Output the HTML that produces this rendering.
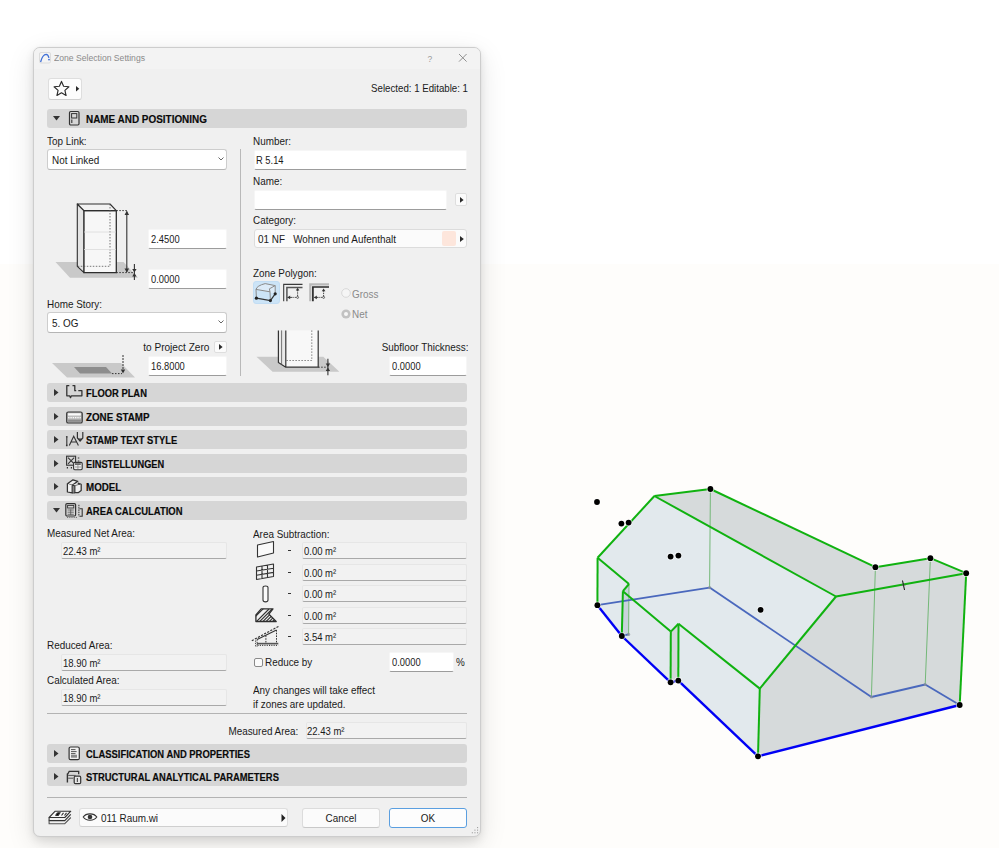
<!DOCTYPE html>
<html><head><meta charset="utf-8"><style>
html,body{margin:0;padding:0}
body{width:999px;height:848px;background:linear-gradient(to bottom,#ffffff 0,#ffffff 264px,#fefdfb 264px,#fefdfb 100%);position:relative;overflow:hidden;font-family:"Liberation Sans",sans-serif}
.a{position:absolute;box-sizing:border-box}
.t{position:absolute;white-space:pre;line-height:1;font-family:"Liberation Sans",sans-serif}
.b{-webkit-text-stroke:0.15px currentColor}
svg.a{overflow:visible}
</style></head><body>

<div class="a" style="left:33px;top:47px;width:448px;height:790px;background:#f0f0f0;border:1px solid #cdcdcd;border-radius:7px;box-shadow:0 4px 10px rgba(0,0,0,0.09),0 8px 28px rgba(0,0,0,0.11),0 0 2px rgba(0,0,0,0.06)"></div>
<div class="a" style="left:34px;top:48px;width:446px;height:21px;background:#f3f3f3;border-radius:6px 6px 0 0"></div>
<svg class="a" style="left:39px;top:52px;" width="12" height="12" viewBox="0 0 12 12"><rect x="0.5" y="0.5" width="11" height="10.5" rx="1.5" fill="#f4f4f4" stroke="#dcdcdc"/><path d="M1.6 10 C2.6 6 4.6 2.4 7.2 2.3 C8.6 2.3 9.5 4 9.9 5.8" fill="none" stroke="#3f6fd6" stroke-width="1.3"/><circle cx="10" cy="7.6" r="0.9" fill="#3f6fd6"/></svg>
<div class="t" style="left:54.40px;top:53.45px;font-size:9.6px;color:#8b8b8b;transform:scaleX(0.8979);transform-origin:left top;">Zone Selection Settings</div>
<div class="t" style="left:229.70px;width:400px;text-align:center;top:53.86px;font-size:9.5px;color:#9a9a9a;transform:scaleX(0.8947);transform-origin:center top;">?</div>
<svg class="a" style="left:458px;top:53px;" width="10" height="10" viewBox="0 0 10 10"><path d="M1 1 L8.6 8.6 M8.6 1 L1 8.6" stroke="#8a8a8a" stroke-width="0.95"/></svg>
<div class="a" style="left:48px;top:78px;width:34px;height:22px;background:#fdfdfd;border:1px solid #dedede;border-bottom:1px solid #cfcfcf;border-radius:3px"></div>
<svg class="a" style="left:54px;top:80px;" width="16" height="17" viewBox="0 0 16 17"><path d="M7.50 1.40 L9.62 6.29 L14.92 6.79 L10.92 10.31 L12.08 15.51 L7.50 12.80 L2.92 15.51 L4.08 10.31 L0.08 6.79 L5.38 6.29 Z" fill="none" stroke="#2b2b2b" stroke-width="1.15" stroke-linejoin="round"/></svg>
<svg class="a" style="left:76px;top:86px;" width="4" height="6" viewBox="0 0 4 6"><path d="M0 0 L3.3 2.8 L0 5.6 Z" fill="#2a2a2a"/></svg>
<div class="t" style="right:531.30px;top:84.38px;font-size:10.1px;color:#1a1a1a;transform:scaleX(0.9594);transform-origin:right top;">Selected: 1 Editable: 1</div>
<div class="a" style="left:47px;top:109px;width:420px;height:19px;background:#d6d6d6;border-radius:3px"></div>
<svg class="a" style="left:53px;top:116px;" width="7" height="5" viewBox="0 0 7 5"><path d="M0 0 L7 0 L3.5 4.5 Z" fill="#333"/></svg>
<svg class="a" style="left:65px;top:110px;" width="18" height="17" viewBox="0 0 18 17"><rect x="4.5" y="1.5" width="9.5" height="13.5" rx="1.2" fill="none" stroke="#333" stroke-width="1.2"/><rect x="6.6" y="3.6" width="5.2" height="4.4" fill="none" stroke="#333" stroke-width="1"/><path d="M6.8 9.6 V13" stroke="#333" stroke-width="1.1"/></svg>
<div class="t b" style="left:86.40px;top:114.59px;font-size:10px;font-weight:bold;color:#0a0a0a;transform:scaleX(0.9922);transform-origin:left top;">NAME AND POSITIONING</div>
<div class="a" style="left:47px;top:383px;width:420px;height:19px;background:#d6d6d6;border-radius:3px"></div>
<svg class="a" style="left:54px;top:389px;" width="5" height="7" viewBox="0 0 5 7"><path d="M0 0 L4.5 3.5 L0 7 Z" fill="#333"/></svg>
<svg class="a" style="left:65px;top:384px;" width="18" height="17" viewBox="0 0 18 17"><path d="M4.3 1.6 H1.8 V11.8 H4.6 L5.5 13.6 L6.4 11.8 H16.9 V6.7 H13.3 M7.5 1.6 H9.8 V6.7 H11.2" fill="none" stroke="#333" stroke-width="1.3" stroke-linejoin="round"/></svg>
<div class="t b" style="left:86.40px;top:388.59px;font-size:10px;font-weight:bold;color:#0a0a0a;transform:scaleX(0.9370);transform-origin:left top;">FLOOR PLAN</div>
<div class="a" style="left:47px;top:407px;width:420px;height:19px;background:#d6d6d6;border-radius:3px"></div>
<svg class="a" style="left:54px;top:413px;" width="5" height="7" viewBox="0 0 5 7"><path d="M0 0 L4.5 3.5 L0 7 Z" fill="#333"/></svg>
<svg class="a" style="left:65px;top:408px;" width="18" height="17" viewBox="0 0 18 17"><rect x="1.7" y="4" width="15.5" height="11" rx="1.6" fill="#bdbdbd" stroke="#333" stroke-width="1.2"/><rect x="3.1" y="5.3" width="12.7" height="2.2" fill="#fafafa"/><path d="M3.1 9.6 H15.8" stroke="#fafafa" stroke-width="1.2" stroke-dasharray="1.4 0.9"/><rect x="3.1" y="11.6" width="12.7" height="2.2" fill="#8c8c8c"/></svg>
<div class="t b" style="left:86.40px;top:412.59px;font-size:10px;font-weight:bold;color:#0a0a0a;transform:scaleX(0.9782);transform-origin:left top;">ZONE STAMP</div>
<div class="a" style="left:47px;top:430px;width:420px;height:19px;background:#d6d6d6;border-radius:3px"></div>
<svg class="a" style="left:54px;top:436px;" width="5" height="7" viewBox="0 0 5 7"><path d="M0 0 L4.5 3.5 L0 7 Z" fill="#333"/></svg>
<svg class="a" style="left:65px;top:431px;" width="18" height="17" viewBox="0 0 18 17"><path d="M1.8 6.2 V14" stroke="#333" stroke-width="1.1"/><circle cx="1.8" cy="5.8" r="0.9" fill="#333"/><circle cx="1.8" cy="14.4" r="0.9" fill="#333"/><path d="M4.3 14.4 L8.7 5.2 L13.4 14.4 M6.2 11 H11.5" fill="none" stroke="#333" stroke-width="1.1"/><path d="M12.4 1 V7 L15.1 10 L17.8 7 V1" fill="none" stroke="#333" stroke-width="1.2"/><path d="M13.2 7.5 H17 L15.1 9.6 Z" fill="#333"/></svg>
<div class="t b" style="left:86.40px;top:435.59px;font-size:10px;font-weight:bold;color:#0a0a0a;transform:scaleX(0.9362);transform-origin:left top;">STAMP TEXT STYLE</div>
<div class="a" style="left:47px;top:454px;width:420px;height:19px;background:#d6d6d6;border-radius:3px"></div>
<svg class="a" style="left:54px;top:460px;" width="5" height="7" viewBox="0 0 5 7"><path d="M0 0 L4.5 3.5 L0 7 Z" fill="#333"/></svg>
<svg class="a" style="left:65px;top:455px;" width="18" height="17" viewBox="0 0 18 17"><rect x="1.6" y="1.2" width="9" height="9" fill="none" stroke="#333" stroke-width="1.1"/><path d="M3 2.6 L9.2 8.8 M9.2 2.6 L3 8.8" stroke="#333" stroke-width="1.1"/><path d="M12.8 3 H14.3 M12.8 6 H14.3" stroke="#333" stroke-width="1.2"/><rect x="8.6" y="7.4" width="8.6" height="7.3" rx="1.2" fill="#eee" stroke="#333" stroke-width="1.1"/><rect x="10" y="8.4" width="5.8" height="1.3" fill="#333"/><path d="M12.9 10 V14 M10 12 H16" stroke="#888" stroke-width="0.8"/><path d="M1.8 12.7 H3 M5.8 12.7 H7" stroke="#333" stroke-width="1.5"/></svg>
<div class="t b" style="left:86.40px;top:459.59px;font-size:10px;font-weight:bold;color:#0a0a0a;transform:scaleX(0.9260);transform-origin:left top;">EINSTELLUNGEN</div>
<div class="a" style="left:47px;top:477px;width:420px;height:19px;background:#d6d6d6;border-radius:3px"></div>
<svg class="a" style="left:54px;top:483px;" width="5" height="7" viewBox="0 0 5 7"><path d="M0 0 L4.5 3.5 L0 7 Z" fill="#333"/></svg>
<svg class="a" style="left:65px;top:478px;" width="18" height="17" viewBox="0 0 18 17"><g fill="none" stroke="#333" stroke-width="1.25" stroke-linejoin="round"><path d="M2.4 5.8 L8 1.8 L12.8 3.3 L7.2 7.3 Z" fill="#ececec"/><path d="M2.4 5.8 V14 L7.2 14.8 V7.3" fill="#f2f2f2"/><path d="M7.2 7.3 L9.8 7.8 L16.2 6.4 L12.8 5.2" fill="#e8e8e8"/><path d="M9.8 7.8 V14.7 L13.5 14.6 L16.2 12.5 V6.4" fill="#f0f0f0"/><path d="M7.2 14.8 H9.8"/></g><path d="M8.5 8 V14.5" stroke="#888" stroke-width="1.2"/></svg>
<div class="t b" style="left:86.40px;top:482.59px;font-size:10px;font-weight:bold;color:#0a0a0a;transform:scaleX(0.9776);transform-origin:left top;">MODEL</div>
<div class="a" style="left:47px;top:501px;width:420px;height:19px;background:#d6d6d6;border-radius:3px"></div>
<svg class="a" style="left:53px;top:508px;" width="7" height="5" viewBox="0 0 7 5"><path d="M0 0 L7 0 L3.5 4.5 Z" fill="#333"/></svg>
<svg class="a" style="left:65px;top:502px;" width="18" height="17" viewBox="0 0 18 17"><rect x="0.8" y="1.6" width="9.8" height="12.4" rx="1.2" fill="none" stroke="#333" stroke-width="1.2"/><rect x="2.6" y="3.4" width="6.2" height="2.6" fill="none" stroke="#333" stroke-width="0.9"/><path d="M2.6 8 H8.8 M2.6 10.2 H8.8 M2.6 12.3 H8.8 M5.7 7.4 V13" stroke="#555" stroke-width="0.8"/><path d="M13.9 2.8 V14.5" stroke="#333" stroke-width="1" stroke-dasharray="1.5 0.8"/><path d="M14.5 6.8 H17.2 V14.2 H14.5" fill="none" stroke="#333" stroke-width="1.1"/><path d="M2 15.4 H13" stroke="#555" stroke-width="0.8" stroke-dasharray="1.2 1"/></svg>
<div class="t b" style="left:86.40px;top:506.59px;font-size:10px;font-weight:bold;color:#0a0a0a;transform:scaleX(0.9441);transform-origin:left top;">AREA CALCULATION</div>
<div class="a" style="left:47px;top:744px;width:420px;height:19px;background:#d6d6d6;border-radius:3px"></div>
<svg class="a" style="left:54px;top:750px;" width="5" height="7" viewBox="0 0 5 7"><path d="M0 0 L4.5 3.5 L0 7 Z" fill="#333"/></svg>
<svg class="a" style="left:65px;top:745px;" width="18" height="17" viewBox="0 0 18 17"><rect x="4.1" y="2" width="10.2" height="12.7" rx="1.5" fill="#f0f0f0" stroke="#333" stroke-width="1.2"/><path d="M6 4.6 H10.5 M6 6.6 H11.6 M6 8.6 H10.5" stroke="#444" stroke-width="0.9"/><rect x="6" y="9.7" width="6" height="3" fill="#8a8a8a"/></svg>
<div class="t b" style="left:86.40px;top:749.60px;font-size:10px;font-weight:bold;color:#0a0a0a;transform:scaleX(0.9395);transform-origin:left top;">CLASSIFICATION AND PROPERTIES</div>
<div class="a" style="left:47px;top:767px;width:420px;height:19px;background:#d6d6d6;border-radius:3px"></div>
<svg class="a" style="left:54px;top:773px;" width="5" height="7" viewBox="0 0 5 7"><path d="M0 0 L4.5 3.5 L0 7 Z" fill="#333"/></svg>
<svg class="a" style="left:65px;top:768px;" width="18" height="17" viewBox="0 0 18 17"><path d="M2.4 5.5 V14.5" stroke="#333" stroke-width="1.4"/><path d="M2.6 6.2 L4.2 3.4 H13.7 V6.3" fill="none" stroke="#333" stroke-width="1.3"/><path d="M3.2 7.4 H10.5 M3.2 10.2 H8.2" stroke="#555" stroke-width="1"/><rect x="9.2" y="8.2" width="6.5" height="7.4" rx="1.2" fill="#e6e6e6" stroke="#333" stroke-width="1.2"/><path d="M12.4 10 V14" stroke="#555" stroke-width="1.2"/></svg>
<div class="t b" style="left:86.40px;top:772.60px;font-size:10px;font-weight:bold;color:#0a0a0a;transform:scaleX(0.9393);transform-origin:left top;">STRUCTURAL ANALYTICAL PARAMETERS</div>
<div class="t" style="left:46.80px;top:137.08px;font-size:10.1px;color:#1a1a1a;transform:scaleX(0.9802);transform-origin:left top;">Top Link:</div>
<div class="a" style="left:47px;top:149px;width:180px;height:21px;background:#ffffff;border:1px solid #cdcdcd;border-bottom:1px solid #b5b5b5;border-radius:3px"></div>
<div class="t" style="left:51.70px;top:155.58px;font-size:10.1px;color:#1a1a1a;transform:scaleX(0.9802);transform-origin:left top;">Not Linked</div>
<svg class="a" style="left:218px;top:157px;" width="6" height="4" viewBox="0 0 6 4"><path d="M0.5 0.5 L3 3 L5.5 0.5" fill="none" stroke="#555" stroke-width="0.9"/></svg>
<div class="a" style="left:240px;top:149px;width:1px;height:227px;background:#b9b9b9"></div>
<div class="t" style="left:253.00px;top:137.28px;font-size:10.1px;color:#1a1a1a;transform:scaleX(0.9802);transform-origin:left top;">Number:</div>
<div class="a" style="left:254px;top:150px;width:213px;height:20px;background:#ffffff;border:1px solid #f6f6f6;border-bottom:1px solid #9c9c9c;border-radius:2px"></div>
<div class="t" style="left:256.40px;top:154.59px;font-size:10.8px;color:#1a1a1a;transform:scaleX(0.8657);transform-origin:left top;">R 5.14</div>
<div class="t" style="left:253.00px;top:176.78px;font-size:10.1px;color:#1a1a1a;transform:scaleX(0.9802);transform-origin:left top;">Name:</div>
<div class="a" style="left:254px;top:190px;width:193px;height:20px;background:#ffffff;border:1px solid #f6f6f6;border-bottom:1px solid #9c9c9c;border-radius:2px"></div>
<div class="a" style="left:455px;top:193px;width:12px;height:13px;background:#fbfbfb;border:1px solid #dedede;border-radius:2px"></div>
<svg class="a" style="left:459.6px;top:196.6px;" width="5" height="6" viewBox="0 0 5 6"><path d="M0 0 L3.6 2.9 L0 5.8 Z" fill="#2a2a2a"/></svg>
<div class="t" style="left:253.00px;top:215.98px;font-size:10.1px;color:#1a1a1a;transform:scaleX(0.9802);transform-origin:left top;">Category:</div>
<div class="a" style="left:254px;top:229px;width:213px;height:19px;background:#fbfbfb;border:1px solid #dcdcdc;border-radius:3px"></div>
<div class="t" style="left:258.00px;top:235.18px;font-size:10.1px;color:#1a1a1a;transform:scaleX(0.9802);transform-origin:left top;">01 NF   Wohnen und Aufenthalt</div>
<div class="a" style="left:442px;top:231px;width:14px;height:15px;background:#fde6dc;border-radius:2px"></div>
<svg class="a" style="left:460px;top:235.6px;" width="5" height="7" viewBox="0 0 5 7"><path d="M0 0 L3.8 3 L0 6 Z" fill="#2a2a2a"/></svg>
<svg class="a" style="left:50px;top:198px;" width="95" height="90" viewBox="0 0 95 90"><path d="M5.5 64 L20 79.7 L88 79.7 L73.5 64 Z" fill="#c9c9c9"/><path d="M27.3 6 L34 12.6 L34 74.6 L27.3 68.3 Z" fill="#e4e4e4" stroke="#2e2e2e" stroke-width="1.1" stroke-linejoin="round"/><path d="M34 12.6 L66.3 12.6 L66.3 74.6 L34 74.6 Z" fill="#f7f7f7" stroke="#2e2e2e" stroke-width="1.3"/><path d="M27.3 6 L60 6 L66.3 12.6 L34 12.6 Z" fill="#f2f2f2" stroke="#2e2e2e" stroke-width="1.1" stroke-linejoin="round"/><path d="M60 6 V68.3 H27.3" fill="none" stroke="#555" stroke-width="0.8" stroke-dasharray="1.5 1.5"/><path d="M34 34 H66 M34 51.5 H66" stroke="#dadada" stroke-width="0.8"/><path d="M66.3 12.6 H77 M66.3 74.6 H84" stroke="#333" stroke-width="1" stroke-dasharray="1.5 1.5"/><path d="M76.8 13.5 V74" stroke="#333" stroke-width="1.1"/><path d="M74.5 17 L76.8 12.8 L79.1 17 Z M74.5 70.5 L76.8 74.6 L79.1 70.5 Z" fill="#333"/><path d="M84.4 66 V82" stroke="#333" stroke-width="1.1"/><path d="M82.2 71 L84.4 74.6 L86.6 71 Z M82.2 78.6 L84.4 75 L86.6 78.6 Z" fill="#333"/></svg>
<div class="a" style="left:148px;top:229px;width:79px;height:20px;background:#ffffff;border:1px solid #f6f6f6;border-bottom:1px solid #9c9c9c;border-radius:2px"></div>
<div class="t" style="left:151.30px;top:233.59px;font-size:10.8px;color:#1a1a1a;transform:scaleX(0.8657);transform-origin:left top;">2.4500</div>
<div class="a" style="left:148px;top:269px;width:79px;height:20px;background:#ffffff;border:1px solid #f6f6f6;border-bottom:1px solid #9c9c9c;border-radius:2px"></div>
<div class="t" style="left:151.30px;top:273.59px;font-size:10.8px;color:#1a1a1a;transform:scaleX(0.8657);transform-origin:left top;">0.0000</div>
<div class="t" style="left:46.80px;top:300.18px;font-size:10.1px;color:#1a1a1a;transform:scaleX(0.9802);transform-origin:left top;">Home Story:</div>
<div class="a" style="left:47px;top:312px;width:180px;height:21px;background:#ffffff;border:1px solid #cdcdcd;border-bottom:1px solid #b5b5b5;border-radius:3px"></div>
<div class="t" style="left:51.70px;top:318.58px;font-size:10.1px;color:#1a1a1a;transform:scaleX(0.9802);transform-origin:left top;">5. OG</div>
<svg class="a" style="left:218px;top:320px;" width="6" height="4" viewBox="0 0 6 4"><path d="M0.5 0.5 L3 3 L5.5 0.5" fill="none" stroke="#555" stroke-width="0.9"/></svg>
<div class="t" style="left:143.20px;top:342.98px;font-size:10.1px;color:#1a1a1a;">to Project Zero</div>
<div class="a" style="left:214px;top:341px;width:13px;height:12px;background:#fbfbfb;border:1px solid #dedede;border-radius:2px"></div>
<svg class="a" style="left:219.1px;top:344.1px;" width="5" height="6" viewBox="0 0 5 6"><path d="M0 0 L3.6 2.9 L0 5.8 Z" fill="#2a2a2a"/></svg>
<div class="a" style="left:148px;top:356px;width:79px;height:20px;background:#ffffff;border:1px solid #f6f6f6;border-bottom:1px solid #9c9c9c;border-radius:2px"></div>
<div class="t" style="left:151.30px;top:360.59px;font-size:10.8px;color:#1a1a1a;transform:scaleX(0.8657);transform-origin:left top;">16.8000</div>
<svg class="a" style="left:50px;top:352px;" width="90" height="28" viewBox="0 0 90 28"><path d="M2 11 L17 25.6 L85 25.6 L71 11 Z" fill="#c9c9c9"/><path d="M24 15 L30 21.6 L62 21.6 L56 15 Z" fill="#8d8d8d"/><path d="M62 21.6 H72" stroke="#333" stroke-dasharray="1.5 1.5"/><path d="M73 3 V21" stroke="#333" stroke-width="1" stroke-dasharray="2 1"/><path d="M70.8 17.5 L73 21.6 L75.2 17.5 Z" fill="#333"/></svg>
<div class="t" style="left:253.00px;top:268.58px;font-size:10.1px;color:#1a1a1a;transform:scaleX(0.9802);transform-origin:left top;">Zone Polygon:</div>
<div class="a" style="left:253px;top:281px;width:27px;height:23px;background:#cce4f7;border:1px solid #c2ddf4;border-radius:3px"></div>
<svg class="a" style="left:253px;top:281px;" width="27" height="23" viewBox="0 0 27 23"><path d="M3 8.4 Q4 4.6 12.2 2.6 L22.2 4.6 L22.2 12.8" fill="#dcebf8" stroke="#8a8a8a" stroke-width="1"/><path d="M3 8.4 L17 10.8 L16.4 7.8 L22.2 4.6" fill="none" stroke="#8a8a8a" stroke-width="1"/><path d="M3 8.4 L3.4 17.2 M17 10.8 L17.4 19.6" fill="none" stroke="#8a8a8a" stroke-width="1"/><path d="M3.4 17.2 L17.4 19.6 L22.2 12.8" fill="none" stroke="#333" stroke-width="1.2"/><circle cx="3.4" cy="17.2" r="1.6" fill="#222"/><circle cx="17.4" cy="19.6" r="1.6" fill="#222"/><circle cx="22.2" cy="12.8" r="1.6" fill="#222"/></svg>
<svg class="a" style="left:283px;top:283px;" width="21" height="20" viewBox="0 0 21 20"><path d="M0.7 18.3 V1.4 H19.5" fill="none" stroke="#3a3a3a" stroke-width="1.1"/><path d="M3.9 18.3 V4.6 H19.5" fill="none" stroke="#555" stroke-width="1.5"/><path d="M4.6 14.4 H9" fill="none" stroke="#333" stroke-width="0.9"/><path d="M4.4 14.4 L7.2 12.6 L7.2 16.2 Z" fill="#333"/><path d="M9.5 14.4 H14" stroke="#333" stroke-width="0.9" stroke-dasharray="1.2 1"/><path d="M14.6 7 V14" stroke="#333" stroke-width="0.9" stroke-dasharray="1.4 0.9"/><path d="M14.6 4.8 L12.8 7.6 L16.4 7.6 Z" fill="#333"/><circle cx="14.6" cy="14.4" r="1" fill="none" stroke="#333" stroke-width="0.7"/></svg>
<svg class="a" style="left:309px;top:283px;" width="21" height="20" viewBox="0 0 21 20"><path d="M1.3 18.3 V1.4 H20" fill="none" stroke="#b9b9b9" stroke-width="2.2"/><path d="M3.9 18.3 V4 H20" fill="none" stroke="#2a2a2a" stroke-width="1.7"/><path d="M5.2 14.4 H9" fill="none" stroke="#333" stroke-width="0.9"/><path d="M5 14.4 L7.8 12.6 L7.8 16.2 Z" fill="#333"/><path d="M9.5 14.4 H14" stroke="#333" stroke-width="0.9" stroke-dasharray="1.2 1"/><path d="M14.6 7.4 V14" stroke="#333" stroke-width="0.9" stroke-dasharray="1.4 0.9"/><path d="M14.6 5.4 L12.8 8.2 L16.4 8.2 Z" fill="#333"/><circle cx="14.6" cy="14.4" r="1" fill="none" stroke="#333" stroke-width="0.7"/></svg>
<svg class="a" style="left:341px;top:288px;" width="10" height="10" viewBox="0 0 10 10"><circle cx="5" cy="5" r="4.3" fill="#f5f5f5" stroke="#d5d5d5" stroke-width="0.9"/></svg>
<div class="t" style="left:351.90px;top:289.98px;font-size:10.1px;color:#8a8a8a;transform:scaleX(0.9802);transform-origin:left top;">Gross</div>
<svg class="a" style="left:341px;top:308.5px;" width="10" height="10" viewBox="0 0 10 10"><circle cx="5" cy="5" r="4.6" fill="#c2c2c2"/><circle cx="5" cy="5" r="2" fill="#f7f7f7"/></svg>
<div class="t" style="left:351.90px;top:310.38px;font-size:10.1px;color:#8a8a8a;transform:scaleX(0.9802);transform-origin:left top;">Net</div>
<svg class="a" style="left:254px;top:328px;" width="90" height="50" viewBox="0 0 90 50"><path d="M2.5 28.8 L18.6 43.8 L85.4 43.8 L69.3 28.8 Z" fill="#c9c9c9"/><path d="M24.4 2.4 L31.8 2.4 L31.8 39.2 L24.4 34.6 Z" fill="#e9e9e9"/><rect x="31.8" y="2.4" width="32.4" height="36.8" fill="#f8f8f8"/><path d="M24.4 2.4 V34.6 L31.8 39.2 H64.2 V2.4 M31.8 2.4 V39.2" fill="none" stroke="#333" stroke-width="1.2" stroke-linejoin="round"/><path d="M27.6 2.4 V36.6" stroke="#555" stroke-width="0.8"/><path d="M57.8 2.4 V32.5 H31.8" fill="none" stroke="#666" stroke-width="0.8" stroke-dasharray="1.5 1.5"/><path d="M64.2 39.2 H73" stroke="#333" stroke-dasharray="1.5 1.5"/><path d="M73.9 30.7 V47.3" stroke="#333" stroke-width="1.1"/><path d="M71.7 35.5 L73.9 39 L76.1 35.5 Z M71.7 43 L73.9 39.4 L76.1 43 Z" fill="#333"/></svg>
<div class="t" style="right:530.80px;top:342.98px;font-size:10.1px;color:#1a1a1a;transform:scaleX(0.9802);transform-origin:right top;">Subfloor Thickness:</div>
<div class="a" style="left:389px;top:356px;width:78px;height:20px;background:#ffffff;border:1px solid #f6f6f6;border-bottom:1px solid #9c9c9c;border-radius:2px"></div>
<div class="t" style="left:392.10px;top:360.59px;font-size:10.8px;color:#1a1a1a;transform:scaleX(0.8657);transform-origin:left top;">0.0000</div>
<div class="t" style="left:46.80px;top:529.38px;font-size:10.1px;color:#1a1a1a;transform:scaleX(0.9802);transform-origin:left top;">Measured Net Area:</div>
<div class="a" style="left:61px;top:542px;width:166px;height:17px;background:#f2f2f2;border:1px solid #e6e6e6;border-bottom:1px solid #a9a9a9;border-radius:2px"></div>
<div class="t" style="left:62.80px;top:546.02px;font-size:10.6px;color:#1a1a1a;transform:scaleX(0.8962);transform-origin:left top;">22.43 m²</div>
<div class="t" style="left:46.80px;top:641.38px;font-size:10.1px;color:#1a1a1a;transform:scaleX(0.9802);transform-origin:left top;">Reduced Area:</div>
<div class="a" style="left:61px;top:654px;width:166px;height:17px;background:#f2f2f2;border:1px solid #e6e6e6;border-bottom:1px solid #a9a9a9;border-radius:2px"></div>
<div class="t" style="left:62.80px;top:658.02px;font-size:10.6px;color:#1a1a1a;transform:scaleX(0.8962);transform-origin:left top;">18.90 m²</div>
<div class="t" style="left:46.80px;top:676.38px;font-size:10.1px;color:#1a1a1a;transform:scaleX(0.9802);transform-origin:left top;">Calculated Area:</div>
<div class="a" style="left:61px;top:689px;width:166px;height:17px;background:#f2f2f2;border:1px solid #e6e6e6;border-bottom:1px solid #a9a9a9;border-radius:2px"></div>
<div class="t" style="left:62.80px;top:693.02px;font-size:10.6px;color:#1a1a1a;transform:scaleX(0.8962);transform-origin:left top;">18.90 m²</div>
<div class="t" style="left:253.00px;top:529.58px;font-size:10.1px;color:#1a1a1a;transform:scaleX(0.9802);transform-origin:left top;">Area Subtraction:</div>
<div class="a" style="left:302px;top:542px;width:165px;height:16.5px;background:#f2f2f2;border:1px solid #e6e6e6;border-bottom:1px solid #a9a9a9;border-radius:2px"></div>
<div class="t" style="left:303.60px;top:545.77px;font-size:10.6px;color:#1a1a1a;transform:scaleX(0.8962);transform-origin:left top;">0.00 m²</div>
<div class="a" style="left:287.5px;top:550px;width:3.5px;height:1px;background:#333"></div>
<div class="a" style="left:302px;top:564px;width:165px;height:16.5px;background:#f2f2f2;border:1px solid #e6e6e6;border-bottom:1px solid #a9a9a9;border-radius:2px"></div>
<div class="t" style="left:303.60px;top:567.77px;font-size:10.6px;color:#1a1a1a;transform:scaleX(0.8962);transform-origin:left top;">0.00 m²</div>
<div class="a" style="left:287.5px;top:572px;width:3.5px;height:1px;background:#333"></div>
<div class="a" style="left:302px;top:585px;width:165px;height:16.5px;background:#f2f2f2;border:1px solid #e6e6e6;border-bottom:1px solid #a9a9a9;border-radius:2px"></div>
<div class="t" style="left:303.60px;top:588.77px;font-size:10.6px;color:#1a1a1a;transform:scaleX(0.8962);transform-origin:left top;">0.00 m²</div>
<div class="a" style="left:287.5px;top:593px;width:3.5px;height:1px;background:#333"></div>
<div class="a" style="left:302px;top:607px;width:165px;height:16.5px;background:#f2f2f2;border:1px solid #e6e6e6;border-bottom:1px solid #a9a9a9;border-radius:2px"></div>
<div class="t" style="left:303.60px;top:610.77px;font-size:10.6px;color:#1a1a1a;transform:scaleX(0.8962);transform-origin:left top;">0.00 m²</div>
<div class="a" style="left:287.5px;top:615px;width:3.5px;height:1px;background:#333"></div>
<div class="a" style="left:302px;top:628px;width:165px;height:16.5px;background:#f2f2f2;border:1px solid #e6e6e6;border-bottom:1px solid #a9a9a9;border-radius:2px"></div>
<div class="t" style="left:303.60px;top:631.77px;font-size:10.6px;color:#1a1a1a;transform:scaleX(0.8962);transform-origin:left top;">3.54 m²</div>
<div class="a" style="left:287.5px;top:636px;width:3.5px;height:1px;background:#333"></div>
<svg class="a" style="left:255px;top:540px;" width="22" height="20" viewBox="0 0 22 20"><path d="M2.5 5 L18.5 1.5 L18.5 13 L2.5 17 Z" fill="#fafafa" stroke="#333" stroke-width="1.1" stroke-linejoin="round"/></svg>
<svg class="a" style="left:255px;top:562px;" width="22" height="20" viewBox="0 0 22 20"><path d="M1.5 5 L18.5 2 L18.5 14.5 L1.5 17.5 Z M1.5 9 L18.5 6.2 M1.5 13.2 L18.5 10.4 M7 4 V16.5 M12.5 3 V15.5" fill="none" stroke="#333" stroke-width="1.1" stroke-linejoin="round"/></svg>
<svg class="a" style="left:255px;top:584px;" width="22" height="20" viewBox="0 0 22 20"><path d="M8 3.5 C8 1.5 13 1.5 13 3.5 L13 16 C13 18.5 8 18.5 8 16 Z" fill="#fafafa" stroke="#333" stroke-width="1.1"/></svg>
<svg class="a" style="left:254px;top:604px;" width="26" height="20" viewBox="0 0 26 20"><defs><clipPath id="hc"><path d="M1.9 11 L7.2 4.8 L19 4.8 L14.9 10.1 L22.2 17.5 L1.9 17.5 Z"/></clipPath></defs><g clip-path="url(#hc)" stroke="#333" stroke-width="1.1"><path d="M-2 16 L12 2 M1 19 L15 5 M4.2 19 L18.2 5 M7.4 19 L21.4 5 M10.6 19 L24.6 5 M13.8 19 L27.8 5 M17 19 L31 5"/></g><path d="M1.9 11 L7.2 4.8 L19 4.8 L14.9 10.1 L22.2 17.5 L1.9 17.5 Z" fill="none" stroke="#2e2e2e" stroke-width="1.3" stroke-linejoin="round"/></svg>
<svg class="a" style="left:250px;top:624px;" width="32" height="26" viewBox="0 0 32 26"><path d="M1.8 16.7 L28.9 2.2" stroke="#333" stroke-width="1.1" stroke-dasharray="2.2 1.3"/><path d="M7.1 15.5 L26.5 6" stroke="#333" stroke-width="1.1"/><path d="M26.5 6 V19.6 M15.9 11.5 V19.6" stroke="#333" stroke-width="1" stroke-dasharray="1.6 1.1"/><path d="M7 19.6 H28.3" stroke="#555" stroke-width="1.6"/><path d="M7.5 21.4 H28.3" stroke="#444" stroke-width="1.3" stroke-dasharray="1.1 1.2"/><path d="M5.6 16.5 V23 M7.1 15.5 V23" stroke="#333" stroke-width="0.9" stroke-dasharray="1.3 1"/></svg>
<div class="a" style="left:253.5px;top:657.5px;width:9.5px;height:9.5px;background:#fbfbfb;border:1px solid #8a8a8a;border-radius:2px"></div>
<div class="t" style="left:264.90px;top:658.38px;font-size:10.1px;color:#1a1a1a;transform:scaleX(0.9802);transform-origin:left top;">Reduce by</div>
<div class="a" style="left:389px;top:652px;width:65px;height:20px;background:#ffffff;border:1px solid #f6f6f6;border-bottom:1px solid #9c9c9c;border-radius:2px"></div>
<div class="t" style="left:391.70px;top:656.59px;font-size:10.8px;color:#1a1a1a;transform:scaleX(0.8657);transform-origin:left top;">0.0000</div>
<div class="t" style="left:456.00px;top:658.38px;font-size:10.1px;color:#1a1a1a;transform:scaleX(0.9802);transform-origin:left top;">%</div>
<div class="t" style="left:252.70px;top:686.28px;font-size:10.1px;color:#1a1a1a;transform:scaleX(0.9802);transform-origin:left top;">Any changes will take effect</div>
<div class="t" style="left:252.70px;top:699.78px;font-size:10.1px;color:#1a1a1a;transform:scaleX(0.9802);transform-origin:left top;">if zones are updated.</div>
<div class="a" style="left:47px;top:713px;width:420px;height:1px;background:#b3b3b3"></div>
<div class="t" style="right:700.80px;top:727.18px;font-size:10.1px;color:#1a1a1a;transform:scaleX(0.9802);transform-origin:right top;">Measured Area:</div>
<div class="a" style="left:306px;top:722px;width:161px;height:17px;background:#f2f2f2;border:1px solid #e6e6e6;border-bottom:1px solid #a9a9a9;border-radius:2px"></div>
<div class="t" style="left:307.40px;top:726.02px;font-size:10.6px;color:#1a1a1a;transform:scaleX(0.8962);transform-origin:left top;">22.43 m²</div>
<div class="a" style="left:47px;top:797px;width:420px;height:1px;background:#b3b3b3"></div>
<svg class="a" style="left:47px;top:808px;" width="26" height="18" viewBox="0 0 26 18"><g fill="none" stroke="#333" stroke-width="1.1" stroke-linejoin="round"><path d="M2.1 9.5 L8.2 3.2 H23.8 L17.8 9.5 Z" fill="#f8f8f8"/><path d="M2.1 9.5 V12.6 H17.8 L23.8 6.4"/><path d="M2.1 12.6 V15.7 H17.8 L23.8 9.5" stroke="#555"/></g><g stroke="#333" stroke-width="1.1"><path d="M8.5 7.5 L10.5 4.8 M10.5 4.8 H13 L11.2 7.5 H8.5 M14.5 7.5 L16.5 4.8 M17.5 7.5 L19.5 4.8"/></g></svg>
<div class="a" style="left:79px;top:808px;width:209px;height:19px;background:#fbfbfb;border:1px solid #dedede;border-bottom:1px solid #cfcfcf;border-radius:3px"></div>
<svg class="a" style="left:82px;top:811px;" width="16" height="12" viewBox="0 0 16 12"><path d="M1.2 6 C4 1.8 12 1.8 14.8 6 C12 10.2 4 10.2 1.2 6 Z" fill="none" stroke="#333" stroke-width="1.05"/><circle cx="8" cy="6" r="2.3" fill="#333"/></svg>
<div class="t" style="left:101.10px;top:813.88px;font-size:10.1px;color:#1a1a1a;transform:scaleX(0.9802);transform-origin:left top;">011 Raum.wi</div>
<svg class="a" style="left:281px;top:814px;" width="5" height="8" viewBox="0 0 5 8"><path d="M0.5 0 L4.5 4 L0.5 8 Z" fill="#222"/></svg>
<div class="a" style="left:302px;top:808px;width:78px;height:20px;background:#fbfbfb;border:1px solid #dcdcdc;border-bottom:1px solid #c9c9c9;border-radius:3px"></div>
<div class="t" style="left:140.50px;width:400px;text-align:center;top:813.88px;font-size:10.1px;color:#1a1a1a;transform:scaleX(0.9802);transform-origin:center top;">Cancel</div>
<div class="a" style="left:389px;top:808px;width:78px;height:20px;background:#fdfdfd;border:1px solid #5b9fe0;border-radius:3px"></div>
<div class="t" style="left:228.00px;width:400px;text-align:center;top:813.88px;font-size:10.1px;color:#1a1a1a;transform:scaleX(0.9802);transform-origin:center top;">OK</div>
<svg class="a" style="left:471px;top:827px;" width="9" height="9" viewBox="0 0 9 9"><g fill="#a0a0a0"><rect x="6" y="0" width="1.1" height="1.1"/><rect x="6" y="2.6" width="1.1" height="1.1"/><rect x="3.4" y="2.6" width="1.1" height="1.1"/><rect x="6" y="5.2" width="1.1" height="1.1"/><rect x="3.4" y="5.2" width="1.1" height="1.1"/><rect x="0.8" y="5.2" width="1.1" height="1.1"/></g></svg>
<svg class="a" style="left:0;top:0" width="999" height="848" viewBox="0 0 999 848"><polygon points="597.6,557.8 654.4,496 836,596.5 759.8,688.6 758,756.3 678.3,680.6 670.6,682.3 621.8,636 597.4,605.2" fill="#e2e9ed"/><polygon points="654.4,496 710.4,489 875.4,567.2 930.4,558.2 966.2,573.2 959.7,705 758,756.3 759.8,688.6 836,596.5" fill="#d6dadb"/><polygon points="622.9,591.2 629,584 628.6,634.4 621.8,636" fill="#c8d3db"/><polygon points="670.8,631.6 678.5,623.8 678.3,680.6 670.6,682.3" fill="#d3d7d9"/><line x1="710.4" y1="489" x2="709.6" y2="587.6" stroke="#74b878" stroke-width="1"/><line x1="875.4" y1="567.2" x2="871.4" y2="697" stroke="#74b878" stroke-width="1"/><line x1="930.4" y1="558.2" x2="925.2" y2="684.5" stroke="#74b878" stroke-width="1"/><line x1="629" y1="584" x2="628.6" y2="634.4" stroke="#74b878" stroke-width="1"/><line x1="597.4" y1="605.2" x2="709.6" y2="587.6" stroke="#4a68bd" stroke-width="1.8"/><line x1="709.6" y1="587.6" x2="871.4" y2="697" stroke="#4a68bd" stroke-width="1.8"/><line x1="871.4" y1="697" x2="925.2" y2="684.5" stroke="#4a68bd" stroke-width="1.8"/><line x1="925.2" y1="684.5" x2="959.7" y2="705" stroke="#4a68bd" stroke-width="1.8"/><line x1="621.8" y1="636" x2="628.6" y2="634.4" stroke="#4a68bd" stroke-width="1.8"/><line x1="597.4" y1="605.2" x2="621.8" y2="636" stroke="#0000f5" stroke-width="2.4"/><line x1="621.8" y1="636" x2="670.6" y2="682.3" stroke="#0000f5" stroke-width="2.4"/><line x1="670.6" y1="682.3" x2="678.3" y2="680.6" stroke="#0000f5" stroke-width="2.4"/><line x1="678.3" y1="680.6" x2="758" y2="756.3" stroke="#0000f5" stroke-width="2.4"/><line x1="758" y1="756.3" x2="959.7" y2="705" stroke="#0000f5" stroke-width="2.4"/><line x1="597.6" y1="557.8" x2="654.4" y2="496" stroke="#10b210" stroke-width="2"/><line x1="654.4" y1="496" x2="710.4" y2="489" stroke="#10b210" stroke-width="2"/><line x1="710.4" y1="489" x2="875.4" y2="567.2" stroke="#10b210" stroke-width="2"/><line x1="875.4" y1="567.2" x2="930.4" y2="558.2" stroke="#10b210" stroke-width="2"/><line x1="930.4" y1="558.2" x2="966.2" y2="573.2" stroke="#10b210" stroke-width="2"/><line x1="654.4" y1="496" x2="836" y2="596.5" stroke="#10b210" stroke-width="2"/><line x1="836" y1="596.5" x2="966.2" y2="573.2" stroke="#10b210" stroke-width="2"/><line x1="836" y1="596.5" x2="759.8" y2="688.6" stroke="#10b210" stroke-width="2"/><line x1="597.6" y1="557.8" x2="629" y2="584" stroke="#10b210" stroke-width="2"/><line x1="629" y1="584" x2="622.9" y2="591.2" stroke="#10b210" stroke-width="2"/><line x1="622.9" y1="591.2" x2="670.8" y2="631.6" stroke="#10b210" stroke-width="2"/><line x1="670.8" y1="631.6" x2="678.5" y2="623.8" stroke="#10b210" stroke-width="2"/><line x1="678.5" y1="623.8" x2="759.8" y2="688.6" stroke="#10b210" stroke-width="2"/><line x1="597.6" y1="557.8" x2="597.4" y2="605.2" stroke="#10b210" stroke-width="2"/><line x1="622.9" y1="591.2" x2="621.8" y2="636" stroke="#10b210" stroke-width="2"/><line x1="670.8" y1="631.6" x2="670.6" y2="682.3" stroke="#10b210" stroke-width="2"/><line x1="678.5" y1="623.8" x2="678.3" y2="680.6" stroke="#10b210" stroke-width="2"/><line x1="759.8" y1="688.6" x2="758" y2="756.3" stroke="#10b210" stroke-width="2"/><line x1="966.2" y1="573.2" x2="959.7" y2="705" stroke="#10b210" stroke-width="2"/><circle cx="709.6" cy="587.6" r="1.6" fill="#8a9098" fill-opacity="0.7"/><circle cx="871.4" cy="697" r="1.6" fill="#8a9098" fill-opacity="0.7"/><circle cx="925.2" cy="684.5" r="1.6" fill="#8a9098" fill-opacity="0.7"/><circle cx="628.6" cy="634.4" r="1.6" fill="#8a9098" fill-opacity="0.7"/><circle cx="710.4" cy="489" r="3.8" fill="#fff" fill-opacity="0.6"/><circle cx="710.4" cy="489" r="2.9" fill="#000"/><circle cx="597.4" cy="605.2" r="3.8" fill="#fff" fill-opacity="0.6"/><circle cx="597.4" cy="605.2" r="2.9" fill="#000"/><circle cx="621.8" cy="636" r="3.8" fill="#fff" fill-opacity="0.6"/><circle cx="621.8" cy="636" r="2.9" fill="#000"/><circle cx="670.6" cy="682.3" r="3.8" fill="#fff" fill-opacity="0.6"/><circle cx="670.6" cy="682.3" r="2.9" fill="#000"/><circle cx="678.3" cy="680.6" r="3.8" fill="#fff" fill-opacity="0.6"/><circle cx="678.3" cy="680.6" r="2.9" fill="#000"/><circle cx="758" cy="756.3" r="3.8" fill="#fff" fill-opacity="0.6"/><circle cx="758" cy="756.3" r="2.9" fill="#000"/><circle cx="875.4" cy="567.2" r="3.8" fill="#fff" fill-opacity="0.6"/><circle cx="875.4" cy="567.2" r="2.9" fill="#000"/><circle cx="930.4" cy="558.2" r="3.8" fill="#fff" fill-opacity="0.6"/><circle cx="930.4" cy="558.2" r="2.9" fill="#000"/><circle cx="966.2" cy="573.2" r="3.8" fill="#fff" fill-opacity="0.6"/><circle cx="966.2" cy="573.2" r="2.9" fill="#000"/><circle cx="959.7" cy="705" r="3.8" fill="#fff" fill-opacity="0.6"/><circle cx="959.7" cy="705" r="2.9" fill="#000"/><circle cx="597" cy="502" r="3.8" fill="#fff" fill-opacity="0.6"/><circle cx="597" cy="502" r="2.9" fill="#000"/><circle cx="621.4" cy="523.6" r="3.8" fill="#fff" fill-opacity="0.6"/><circle cx="621.4" cy="523.6" r="2.9" fill="#000"/><circle cx="628.6" cy="522.6" r="3.8" fill="#fff" fill-opacity="0.6"/><circle cx="628.6" cy="522.6" r="2.9" fill="#000"/><circle cx="670.6" cy="556.6" r="3.8" fill="#fff" fill-opacity="0.6"/><circle cx="670.6" cy="556.6" r="2.9" fill="#000"/><circle cx="678.4" cy="555.6" r="3.8" fill="#fff" fill-opacity="0.6"/><circle cx="678.4" cy="555.6" r="2.9" fill="#000"/><circle cx="760.6" cy="609.8" r="3.8" fill="#fff" fill-opacity="0.6"/><circle cx="760.6" cy="609.8" r="2.9" fill="#000"/><path d="M902.5 580.5 L904.5 590" stroke="#111" stroke-width="1"/><path d="M901.5 585 L905.5 585" stroke="#555" stroke-width="0.8"/></svg>
</body></html>
